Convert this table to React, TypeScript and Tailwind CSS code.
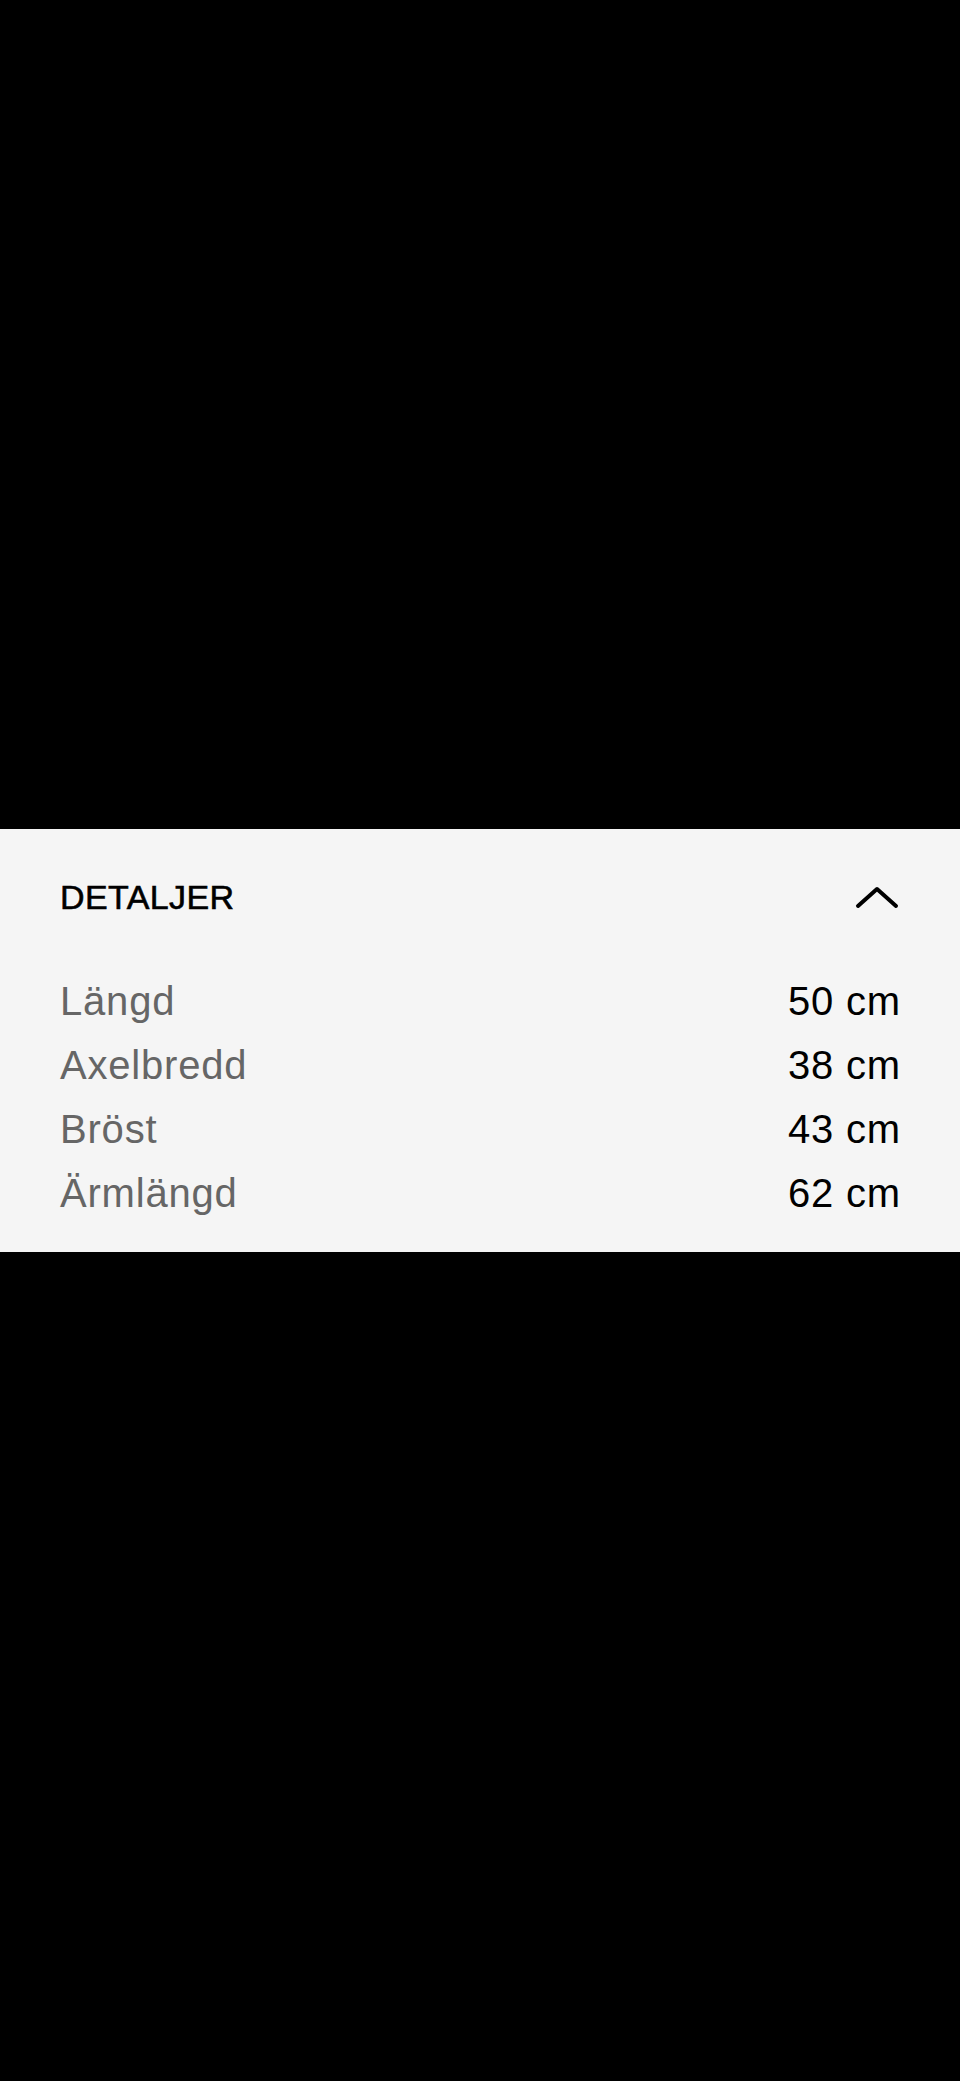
export default function App() {
  const rows = [
    ["Längd", "50 cm"],
    ["Axelbredd", "38 cm"],
    ["Bröst", "43 cm"],
    ["Ärmlängd", "62 cm"],
  ];
  return (
    <div className="min-h-[2081px] w-full bg-black flex flex-col" style={{ fontFamily: '"Liberation Sans", Arial, sans-serif' }}>
      <div className="h-[829px] shrink-0" />
      <div className="bg-[#f5f5f5] px-[60px] pt-[36px] pb-[27px]">
        <div className="flex items-center justify-between h-[64px]">
          <span className="text-[34px] leading-[64px] text-black tracking-[0.4px] [-webkit-text-stroke:0.6px_black]">DETALJER</span>
          <svg width="42" height="21" viewBox="0 0 42 21" className="mr-[2px] overflow-visible">
            <polyline points="2,19 21,2 40,19" fill="none" stroke="#000" strokeWidth="4" strokeLinecap="round" strokeLinejoin="round" />
          </svg>
        </div>
        <div className="mt-[40px] flex flex-col">
          {rows.map(([k, v]) => (
            <div key={k} className="flex justify-between h-[64px] text-[40px] leading-[64px] tracking-[0.8px]">
              <span className="text-[#666666]">{k}</span>
              <span className="text-black mr-[-1px]">{v}</span>
            </div>
          ))}
        </div>
      </div>
      <div className="flex-1 bg-black" />
    </div>
  );
}
